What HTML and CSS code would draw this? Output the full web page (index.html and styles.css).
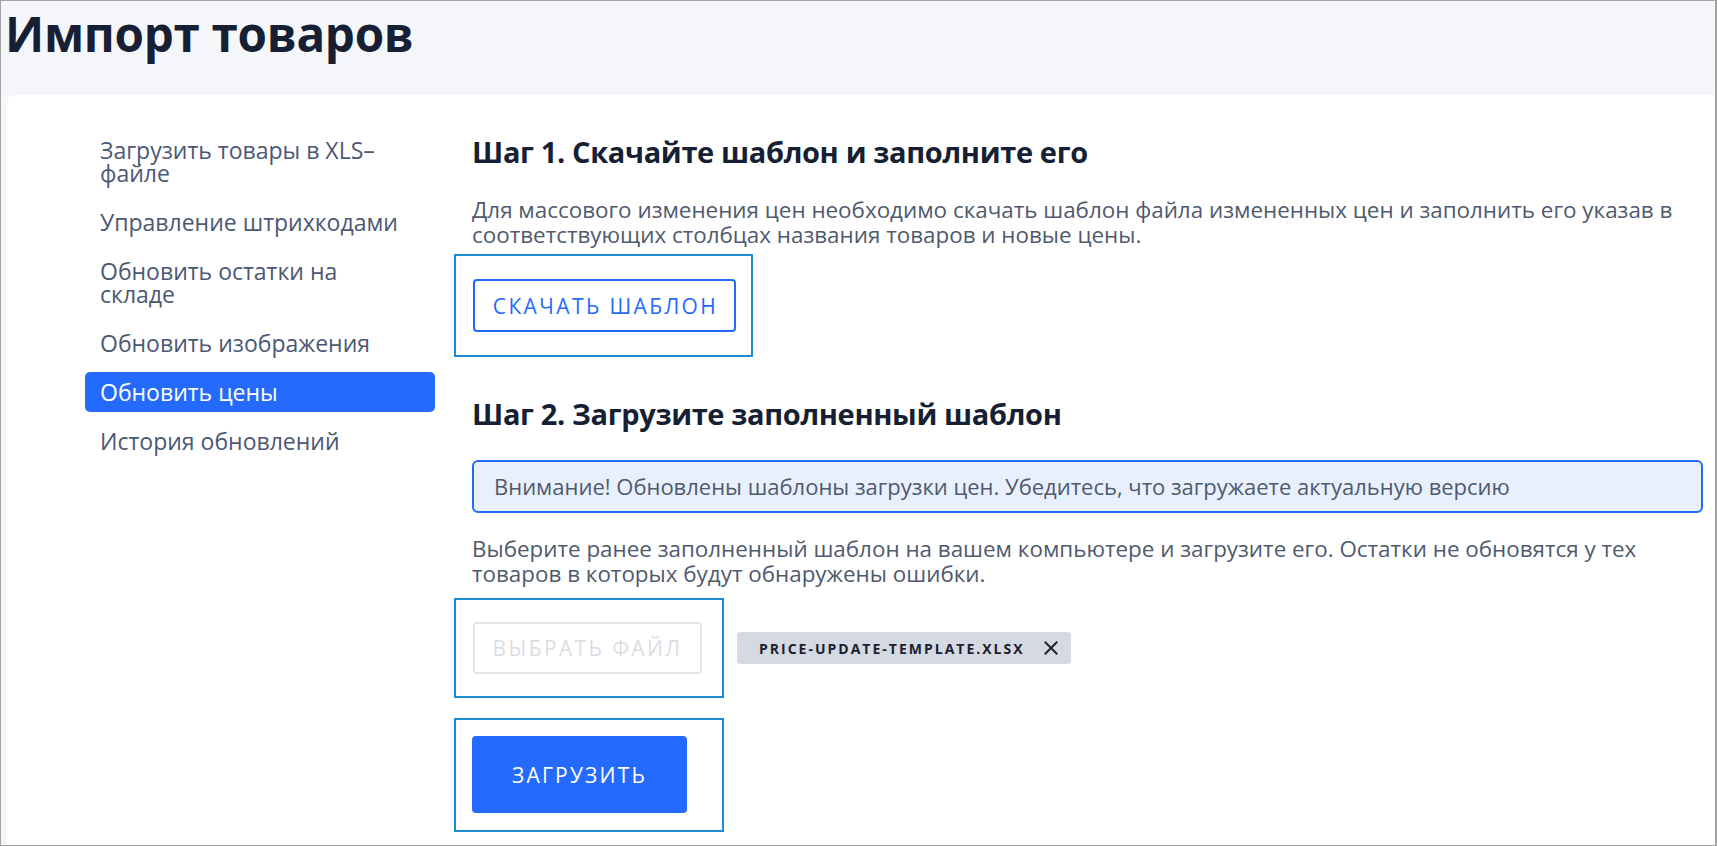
FILE: index.html
```html
<!DOCTYPE html>
<html lang="ru">
<head>
<meta charset="utf-8">
<title>Импорт товаров</title>
<link rel="stylesheet" href="styles.css">
</head>
<body>
<div class="page">
  <header class="header">
    <h1 class="title">Импорт товаров</h1>
  </header>
  <div class="card">
    <nav class="sidebar">
      <a class="nav-item">Загрузить товары в XLS–файле</a>
      <a class="nav-item">Управление штрихкодами</a>
      <a class="nav-item">Обновить остатки на складе</a>
      <a class="nav-item">Обновить изображения</a>
      <a class="nav-item nav-item--active">Обновить цены</a>
      <a class="nav-item">История обновлений</a>
    </nav>
    <main class="content">
      <h2 class="step-title step-title--first">Шаг 1. Скачайте шаблон и заполните его</h2>
      <p class="text text--first">Для массового изменения цен необходимо скачать шаблон файла измененных цен и заполнить его указав в соответствующих столбцах названия товаров и новые цены.</p>
      <div class="frame frame--download">
        <button class="btn btn-outline">СКАЧАТЬ ШАБЛОН</button>
      </div>

      <h2 class="step-title step-title--second">Шаг 2. Загрузите заполненный шаблон</h2>
      <div class="alert">Внимание! Обновлены шаблоны загрузки цен. Убедитесь, что загружаете актуальную версию</div>
      <p class="text text--second">Выберите ранее заполненный шаблон на вашем компьютере и загрузите его. Остатки не обновятся у тех товаров в которых будут обнаружены ошибки.</p>
      <div class="file-row">
        <div class="frame frame--small frame--choose">
          <button class="btn btn-disabled" disabled>ВЫБРАТЬ ФАЙЛ</button>
        </div>
        <span class="chip">PRICE-UPDATE-TEMPLATE.XLSX
          <svg class="chip-close" width="14" height="14" viewBox="0 0 14 14" aria-hidden="true"><path d="M1.5 1.5 L12.5 12.5 M12.5 1.5 L1.5 12.5" stroke="#1b2030" stroke-width="2" fill="none" stroke-linecap="square"/></svg>
        </span>
      </div>
      <div class="frame frame--small frame--upload">
        <button class="btn btn-primary">ЗАГРУЗИТЬ</button>
      </div>
    </main>
  </div>
</div>
</body>
</html>
```

FILE: styles.css
```css
* { box-sizing: border-box; }
html, body { margin: 0; padding: 0; }
body {
  font-family: "Open Sans", "Noto Sans", sans-serif;
  background: #ffffff;
}
.page {
  height: 846px;
  border: 1px solid #a3a3a3;
  border-right-width: 2px;
  background: #f5f6fa;
  display: flex;
  flex-direction: column;
  overflow: hidden;
}
.header {
  height: 94px;
  padding-left: 4px;
  flex: none;
}
.title {
  margin: 0;
  font-size: 47.6px;
  font-weight: 700;
  line-height: 66px;
  color: #161f33;
  letter-spacing: -0.3px;
}
.card {
  flex: 1;
  margin-left: 6px;
  background: #ffffff;
  border-top-left-radius: 8px;
  display: flex;
}
.sidebar {
  width: 428px;
  flex: none;
  padding: 35px 0 0 78px;
  display: flex;
  flex-direction: column;
  gap: 9px;
}
.nav-item {
  display: block;
  padding: 8.5px 22px 8.5px 15px;
  font-size: 23px;
  line-height: 23px;
  color: #4b5874;
  border-radius: 5px;
}
.nav-item--active {
  background: #246bfd;
  color: #ffffff;
}
.content {
  flex: 1;
  padding: 0 12px 0 37px;
  display: flex;
  flex-direction: column;
  align-items: flex-start;
}
.step-title {
  margin: 0;
  font-size: 29px;
  line-height: 34px;
  font-weight: 700;
  color: #161f33;
  letter-spacing: -0.35px;
}
.step-title--first { margin-top: 40px; }
.step-title--second { margin-top: 40px; }
.text {
  margin: 0;
  font-size: 22.4px;
  line-height: 25px;
  color: #4f5a6e;
}
.text--first { margin-top: 28px; }
.text--second { margin-top: 23px; }
.frame {
  border: 2px solid #1d8bd1;
  margin-left: -18px;
  padding: 23px 15px 23px 17px;
}
.frame--download { margin-top: 7px; }
.frame--small { width: 270px; }
.frame--choose { padding: 22px 18px 22px 17px; }
.frame--upload { margin-top: 20px; padding: 16px 18px 17px 16px; }
.btn {
  font-family: "Open Sans", "Noto Sans", sans-serif;
  font-size: 21px;
  letter-spacing: 2.4px;
  border-radius: 4px;
  display: block;
  cursor: pointer;
}
.btn-outline {
  height: 53px;
  width: 263px;
  padding: 0 0 0 2px;
  background: #ffffff;
  border: 2px solid #246bfd;
  color: #246bfd;
}
.btn-disabled {
  height: 52px;
  width: 229px;
  padding: 0;
  background: #ffffff;
  border: 2px solid #e3e4e9;
  color: #dcdde3;
}
.btn-primary {
  height: 77px;
  width: 215px;
  padding: 0;
  background: #246bfd;
  border: none;
  color: #ffffff;
  letter-spacing: 2.2px;
}
.alert {
  margin-top: 29px;
  align-self: stretch;
  padding: 12px 20px;
  border: 2px solid #246bfd;
  border-radius: 6px;
  background: #e8f0fd;
  font-size: 22px;
  line-height: 25px;
  color: #4f5a6e;
}
.file-row {
  margin-top: 12px;
  display: flex;
  align-items: center;
  gap: 13px;
}
.chip {
  height: 32px;
  display: inline-flex;
  align-items: center;
  gap: 19px;
  padding: 0 13px 0 22px;
  background: #d5d9e2;
  border-radius: 4px;
  font-size: 14px;
  font-weight: 700;
  letter-spacing: 2px;
  color: #1b2030;
}
.chip-close { flex: none; }
```
